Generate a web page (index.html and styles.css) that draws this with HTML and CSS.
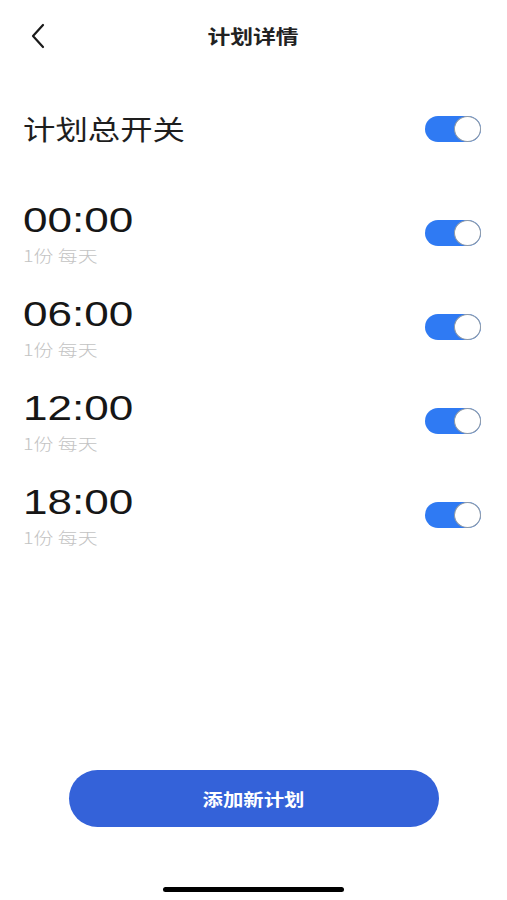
FILE: index.html
```html
<!DOCTYPE html>
<html lang="zh">
<head>
<meta charset="utf-8">
<title>计划详情</title>
<link rel="stylesheet" href="styles.css">
</head>
<body>
<div class="page">
  <header class="header">
    <button class="back" aria-label="返回">
      <svg width="16" height="26" viewBox="0 0 16 26"><polyline points="13,2 3,13 13,24" fill="none" stroke="#1a1a1a" stroke-width="2.2" stroke-linecap="round" stroke-linejoin="round"/></svg>
    </button>
    <h1 class="title"><span class="wide">计划详情</span></h1>
    <div></div>
  </header>

  <main class="main">
    <div class="master-row">
      <span class="master-label wide">计划总开关</span>
      <span class="toggle on"><span class="knob"></span></span>
    </div>

    <ul class="plans">
      <li class="plan">
        <div class="plan-info">
          <div class="time"><span class="wide">00:00</span></div>
          <div class="sub"><span class="wide">1份 每天</span></div>
        </div>
        <span class="toggle on"><span class="knob"></span></span>
      </li>
      <li class="plan">
        <div class="plan-info">
          <div class="time"><span class="wide">06:00</span></div>
          <div class="sub"><span class="wide">1份 每天</span></div>
        </div>
        <span class="toggle on"><span class="knob"></span></span>
      </li>
      <li class="plan">
        <div class="plan-info">
          <div class="time"><span class="wide">12:00</span></div>
          <div class="sub"><span class="wide">1份 每天</span></div>
        </div>
        <span class="toggle on"><span class="knob"></span></span>
      </li>
      <li class="plan">
        <div class="plan-info">
          <div class="time"><span class="wide">18:00</span></div>
          <div class="sub"><span class="wide">1份 每天</span></div>
        </div>
        <span class="toggle on"><span class="knob"></span></span>
      </li>
    </ul>
  </main>

  <footer class="footer">
    <button class="add-btn"><span class="wide">添加新计划</span></button>
    <div class="home-bar"></div>
  </footer>
</div>
</body>
</html>
```

FILE: styles.css
```css
* { box-sizing: border-box; }
html, body { margin: 0; padding: 0; background: #fff; }
body {
  font-family: "Liberation Sans", "Noto Sans CJK SC", sans-serif;
  color: #1a1a1a;
}
.page {
  width: 507px;
  height: 900px;
  display: flex;
  flex-direction: column;
}
.wide {
  display: inline-block;
  transform: scaleX(1.2);
}
.header {
  height: 72px;
  display: grid;
  grid-template-columns: 1fr auto 1fr;
  align-items: center;
  padding: 0 30px;
}
.back {
  border: 0;
  background: none;
  padding: 0;
  width: 16px;
  height: 26px;
  display: flex;
}
.title {
  margin: 0;
  font-size: 19px;
  font-weight: 700;
  line-height: 26px;
  color: #222;
  font-family: "Noto Sans CJK SC", sans-serif;
}
.main {
  flex: 1;
  padding: 0 26px 0 23px;
}
.master-row {
  margin-top: 39px;
  height: 36px;
  display: flex;
  align-items: center;
  justify-content: space-between;
}
.master-label {
  font-family: "Noto Sans CJK SC", sans-serif;
  font-size: 27px;
  line-height: 36px;
  color: #1e1e1e;
  transform-origin: left center;
}
.plans {
  list-style: none;
  margin: 53px 0 0;
  padding: 0;
  display: flex;
  flex-direction: column;
  gap: 29px;
}
.plan {
  display: flex;
  align-items: center;
  justify-content: space-between;
}
.plan-info {
  display: flex;
  flex-direction: column;
  gap: 5px;
}
.time {
  font-size: 35px;
  line-height: 40px;
  color: #161616;
}
.time .wide {
  transform: scaleX(1.26);
  transform-origin: left center;
}
.sub .wide {
  transform: scaleX(1.24);
  transform-origin: left center;
}
.sub {
  font-family: "Noto Sans CJK SC", sans-serif;
  font-weight: 300;
  font-size: 16px;
  line-height: 20px;
  color: #c3c3c3;
}
.toggle {
  position: relative;
  width: 56px;
  height: 26px;
  border-radius: 13px;
  background: #2f7af3;
  flex: none;
}
.knob {
  position: absolute;
  top: 0;
  right: 0;
  width: 27px;
  height: 26px;
  border-radius: 50%;
  background: #fff;
  border: 1.5px solid #8f9aa6;
}
.footer {
  display: flex;
  flex-direction: column;
  align-items: center;
  padding-bottom: 8px;
}
.add-btn {
  width: 370px;
  height: 57px;
  border: 0;
  border-radius: 29px;
  background: #3462d9;
  color: #fff;
  font-family: "Noto Sans CJK SC", sans-serif;
  font-size: 17px;
  font-weight: 700;
}
.home-bar {
  margin-top: 60px;
  width: 181px;
  height: 5px;
  border-radius: 3px;
  background: #000;
}
```
